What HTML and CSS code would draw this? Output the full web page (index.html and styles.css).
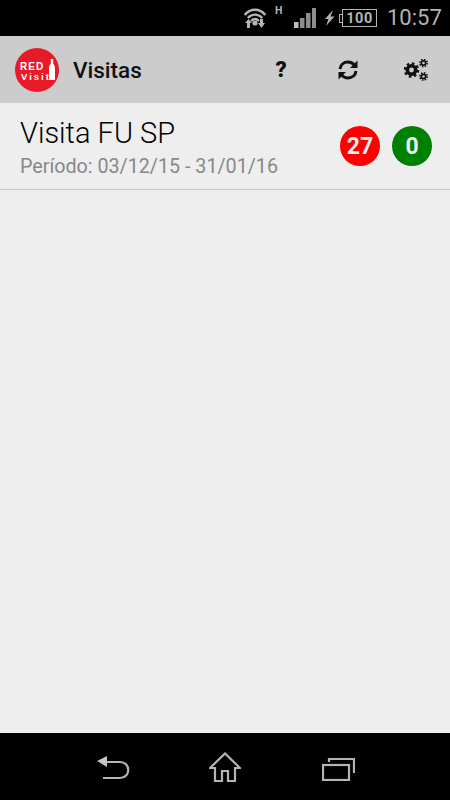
FILE: index.html
```html
<!DOCTYPE html>
<html lang="en">
<head>
  <meta charset="UTF-8">
  <meta name="viewport" content="width=device-width, initial-scale=1.0">
  <title>Visitas</title>
  <link rel="stylesheet" href="styles.css">
</head>
<body>
  <div class="phone">
    <div class="status-bar">
      <svg class="wifi" width="22" height="20" viewBox="0 0 22 20">
        <g fill="none" stroke="#b4b4b4" stroke-width="2.4">
          <path d="M0.8 7 C6 0 16 0 21.2 7"/>
          <path d="M3.8 10 C8 5.5 14 5.5 18.2 10"/>
          <path d="M7 13 C9.5 10.5 12.5 10.5 15 13"/>
        </g>
        <circle cx="11" cy="15" r="2.6" fill="#b4b4b4"/>
        <path d="M1 15 L4.5 11 L8 15 H6 V20 H3 V15 Z M14 15 H16 V11 H19 V15 H21 L17.5 20 Z" fill="#b4b4b4"/>
      </svg>
      <span class="net-type">H</span>
      <svg class="signal" width="22" height="20" viewBox="0 0 22 20">
        <rect x="0" y="14" width="4.5" height="6" fill="#c0c0c0"/>
        <rect x="6" y="10" width="4.5" height="10" fill="#8e8e8e"/>
        <rect x="12" y="5" width="4.5" height="15" fill="#8e8e8e"/>
        <rect x="18" y="0" width="4" height="20" fill="#8e8e8e"/>
      </svg>
      <svg class="bolt" width="11" height="16" viewBox="0 0 11 16">
        <path d="M9 0 L1 9 H4.5 L2 16 L10.5 6.5 H6.5 Z" fill="#b4b4b4"/>
      </svg>
      <div class="battery">
        <span class="battery-nub"></span>
        <span class="battery-body">100</span>
      </div>
      <span class="clock">10:57</span>
    </div>

    <div class="action-bar">
      <svg class="logo" width="44" height="44" viewBox="0 0 44 44">
        <circle cx="22" cy="22" r="22" fill="#e81a28"/>
        <text class="logo-red" x="5" y="21.5">RED</text>
        <text class="logo-visit" x="6" y="31.5">Visit</text>
        <path d="M35.8 11 H38.2 V15 C38.2 16.5 40 17 40 20 V32 H34 V20 C34 17 35.8 16.5 35.8 15 Z" fill="#fff"/>
      </svg>
      <h1 class="title">Visitas</h1>
      <div class="actions">
        <span class="help">?</span>
        <svg class="refresh" width="22" height="20" viewBox="0 0 22 20">
          <path d="M3 9 C3.5 4.5 7 2 11 2 C14 2 16 3.4 17.5 5" fill="none" stroke="#111" stroke-width="3"/>
          <path d="M20.5 0.5 V8 H13 Z" fill="#111"/>
          <path d="M19 11 C18.5 15.5 15 18 11 18 C8 18 6 16.6 4.5 15" fill="none" stroke="#111" stroke-width="3"/>
          <path d="M1.5 19.5 V12 H9 Z" fill="#111"/>
        </svg>
        <svg class="gears" width="25" height="22" viewBox="0 0 25 22">
          <g fill="none" stroke="#111">
            <circle cx="7.5" cy="11" r="4.2" stroke-width="3.6"/>
            <circle cx="7.5" cy="11" r="6.6" stroke-width="2.4" stroke-dasharray="2.6 2.6"/>
            <circle cx="19.5" cy="4" r="2.2" stroke-width="1.7"/>
            <circle cx="19.5" cy="4" r="3.7" stroke-width="1.5" stroke-dasharray="1.5 1.4"/>
            <circle cx="19.5" cy="17.5" r="2.2" stroke-width="1.7"/>
            <circle cx="19.5" cy="17.5" r="3.7" stroke-width="1.5" stroke-dasharray="1.5 1.4"/>
          </g>
        </svg>
      </div>
    </div>

    <div class="content">
      <div class="visit-row">
        <div class="visit-info">
          <div class="visit-name">Visita FU SP</div>
          <div class="visit-period">Período: 03/12/15 - 31/01/16</div>
        </div>
        <div class="badges">
          <span class="badge red">27</span>
          <span class="badge green">0</span>
        </div>
      </div>
    </div>

    <div class="nav-bar">
      <svg class="nav-back" width="34" height="24" viewBox="0 0 34 24">
        <path d="M9 6 H23 C34 6 34 22 23 22 H6" fill="none" stroke="#b4b4b4" stroke-width="2.2"/>
        <path d="M0 5 L10 0 V11 Z" fill="#c4c4c4"/>
      </svg>
      <svg class="nav-home" width="32" height="30" viewBox="0 0 32 30">
        <path d="M1 16 L16 1.5 L31 16 H26 V29 H19 V19 H13 V29 H6 V16 Z" fill="none" stroke="#b4b4b4" stroke-width="2.2"/>
      </svg>
      <svg class="nav-recent" width="33" height="24" viewBox="0 0 33 24">
        <rect x="1" y="8" width="26" height="15" fill="none" stroke="#b4b4b4" stroke-width="2.2"/>
        <path d="M7 5 V2 H32 V16" fill="none" stroke="#b4b4b4" stroke-width="2.2"/>
      </svg>
    </div>
  </div>
</body>
</html>
```

FILE: styles.css
```css
* {
  margin: 0;
  padding: 0;
  box-sizing: border-box;
}

body {
  background: #000;
  font-family: Roboto, "Liberation Sans", sans-serif;
}

.phone {
  width: 450px;
  height: 800px;
  display: flex;
  flex-direction: column;
  overflow: hidden;
}

.status-bar {
  height: 36px;
  background: #000;
  display: flex;
  align-items: center;
  padding-left: 244px;
  color: #b4b4b4;
}

.wifi {
  margin-top: -1px;
}

.net-type {
  font-size: 10.5px;
  font-weight: bold;
  margin: -15px 0 0 9px;
  width: 8px;
}

.signal {
  margin: -1px 0 0 11px;
}

.bolt {
  margin: 0 0 0 8px;
}

.battery {
  display: flex;
  align-items: center;
  margin: 0 0 0 4px;
}

.battery-nub {
  width: 3px;
  height: 9px;
  border: 1px solid #b4b4b4;
  border-right: 0;
}

.battery-body {
  width: 35px;
  height: 18px;
  border: 1px solid #b4b4b4;
  display: flex;
  align-items: center;
  justify-content: center;
  font-size: 14.5px;
  font-weight: bold;
  letter-spacing: 0.5px;
}

.clock {
  font-size: 22px;
  margin: -2px 0 0 10px;
}

.action-bar {
  height: 67px;
  background: #ccc;
  display: flex;
  align-items: center;
  padding-left: 15px;
}

.logo-red {
  font-family: "Liberation Sans", sans-serif;
  font-size: 10px;
  font-weight: bold;
  fill: #fff;
  letter-spacing: 1.1px;
}

.logo-visit {
  font-family: "Liberation Sans", sans-serif;
  font-size: 9.5px;
  font-weight: bold;
  fill: #fff;
  letter-spacing: 2px;
}

.title {
  font-size: 22.5px;
  font-weight: 500;
  color: #111;
  margin-left: 14px;
}

.actions {
  margin-left: auto;
  display: flex;
  align-items: center;
  padding-right: 21px;
}

.help {
  font-size: 22px;
  font-weight: 900;
  color: #111;
  width: 12px;
  text-align: center;
}

.refresh {
  margin-left: 50px;
}

.gears {
  margin-left: 45px;
}

.content {
  flex: 1;
  background: #eee;
}

.visit-row {
  height: 87px;
  border-bottom: 1px solid #c8c8c8;
  display: flex;
  align-items: center;
  justify-content: space-between;
  padding: 0 18px 0 20px;
}

.visit-name {
  font-size: 29px;
  font-weight: 300;
  color: #000;
  line-height: 32px;
  margin-top: 5px;
}

.visit-period {
  font-size: 19.7px;
  color: #888;
  line-height: 26px;
  margin-top: 5px;
}

.badges {
  display: flex;
  gap: 12px;
}

.badge {
  width: 40px;
  height: 40px;
  border-radius: 50%;
  display: flex;
  align-items: center;
  justify-content: center;
  color: #eee;
  font-size: 23px;
  font-weight: bold;
}

.red {
  background: #f00;
}

.green {
  background: #008000;
}

.nav-bar {
  height: 67px;
  background: #000;
  display: flex;
  align-items: center;
  padding-left: 97px;
}

.nav-back {
  margin-top: 3px;
}

.nav-home {
  margin-left: 78px;
}

.nav-recent {
  margin: 5px 0 0 81px;
}
```
